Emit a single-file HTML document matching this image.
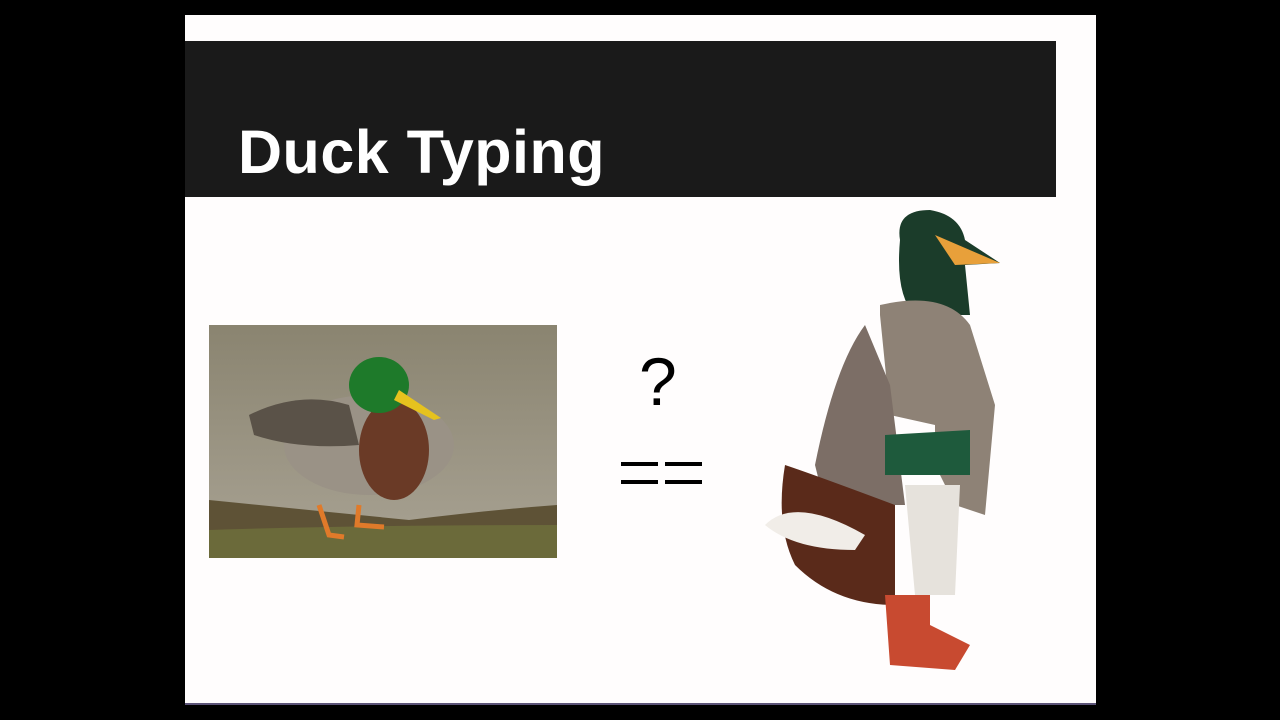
<!DOCTYPE html>
<html><head><meta charset="utf-8"><style>
html,body{margin:0;padding:0;width:1280px;height:720px;background:#000;overflow:hidden}
.slide{position:absolute;left:185px;top:15px;width:911px;height:688px;background:#fffdfd}
.line{position:absolute;left:185px;top:703px;width:911px;height:2px;background:#5c5478}
.bar{position:absolute;left:185px;top:41px;width:871px;height:156px;background:#1a1a1a}
.title{position:absolute;left:238px;top:117px;font:bold 61px "Liberation Sans",sans-serif;color:#fff;white-space:nowrap;letter-spacing:0.5px}
.q{position:absolute;left:639px;top:343px;font:68px "Liberation Sans",sans-serif;color:#000}
.e{position:absolute;height:4px;background:#000}
</style></head><body>
<div class="slide"></div><div class="line"></div>
<div class="bar"></div>
<div class="title">Duck Typing</div>
<svg style="position:absolute;left:209px;top:325px" width="348" height="233" viewBox="0 0 348 233">
<defs><linearGradient id="w" x1="0" y1="0" x2="0" y2="1"><stop offset="0" stop-color="#8a8470"/><stop offset="1" stop-color="#a9a394"/></linearGradient></defs>
<rect width="348" height="233" fill="url(#w)"/>
<path d="M0 175 Q100 185 200 195 Q280 185 348 180 L348 233 L0 233Z" fill="#5e5236"/>
<path d="M0 205 Q150 200 348 200 L348 233 L0 233Z" fill="#6b6a3a"/>
<ellipse cx="160" cy="120" rx="85" ry="50" fill="#9a9286"/>
<ellipse cx="185" cy="125" rx="35" ry="50" fill="#6a3a26"/>
<path d="M40 90 Q90 65 140 80 L150 120 Q90 125 45 110Z" fill="#5a5248"/>
<ellipse cx="170" cy="60" rx="30" ry="28" fill="#1e7a2a"/>
<path d="M190 65 L232 93 L225 95 L185 75Z" fill="#e6c21e"/>
<path d="M110 180 L120 210 L135 212 M150 180 L148 200 L175 202" stroke="#e07a2a" stroke-width="5" fill="none"/>
</svg>
<div class="q">?</div>
<div class="e" style="left:621px;top:462px;width:37px"></div>
<div class="e" style="left:621px;top:480px;width:37px"></div>
<div class="e" style="left:665px;top:462px;width:37px"></div>
<div class="e" style="left:665px;top:480px;width:37px"></div>
<svg style="position:absolute;left:755px;top:205px" width="255" height="470" viewBox="0 0 255 470">
<path d="M145 35 Q140 5 175 5 Q205 10 210 35 L245 58 L210 60 L215 110 L160 110 Q140 90 145 35Z" fill="#1b3c2a"/>
<path d="M180 30 L245 58 L200 60Z" fill="#e8a03a"/>
<path d="M125 100 Q190 85 215 120 L240 200 L230 310 L200 300 L180 260 L180 220 L135 210 L125 110Z" fill="#8e8276"/>
<path d="M110 120 Q80 160 60 260 L70 300 L150 300 L135 180Z" fill="#7c6e66"/>
<path d="M130 230 L215 225 L215 270 L130 270Z" fill="#1e5a3c"/>
<path d="M30 260 Q60 270 140 300 L140 400 Q80 400 40 360 Q20 320 30 260Z" fill="#5a2a1a"/>
<path d="M10 320 Q40 290 110 330 L100 345 Q40 345 10 320Z" fill="#f1ede8"/>
<path d="M150 280 L205 280 L200 390 L160 390Z" fill="#e6e2dc"/>
<path d="M130 390 L175 390 L175 420 L215 440 L200 465 L135 460Z" fill="#c84a30"/>
</svg>
</body></html>
